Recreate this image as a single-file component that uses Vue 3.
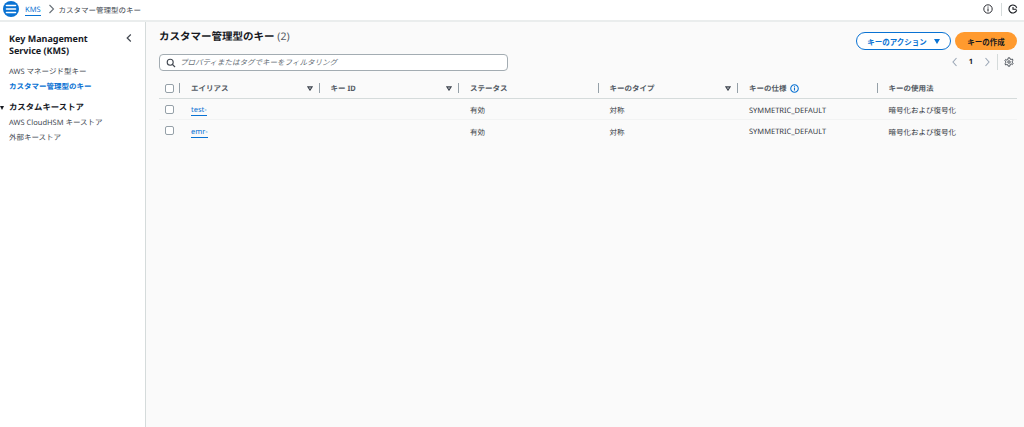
<script setup>
const columns = [
  { label: 'エイリアス', sort: true },
  { label: 'キー ID', sort: true },
  { label: 'ステータス' },
  { label: 'キーのタイプ', sort: true },
  { label: 'キーの仕様', info: true },
  { label: 'キーの使用法' },
]
const rows = [
  { alias: 'test-', id: '', status: '有効', type: '対称', spec: 'SYMMETRIC_DEFAULT', usage: '暗号化および復号化' },
  { alias: 'emr-', id: '', status: '有効', type: '対称', spec: 'SYMMETRIC_DEFAULT', usage: '暗号化および復号化' },
]
</script>

<template>
  <div class="page">
    <header class="topbar">
      <button class="menu" aria-label="menu">
        <svg width="16" height="16" viewBox="0 0 16 16"><path d="M3.5 4.5h9M3.5 8h9M3.5 11.5h9" stroke="#fff" stroke-width="1.6" stroke-linecap="round" /></svg>
      </button>
      <a class="crumb">KMS</a>
      <svg class="crumb-sep" width="8" height="10" viewBox="0 0 8 10"><path d="M2.500 1l4 4-4 4" fill="none" stroke="#687078" stroke-width="1.1" /></svg>
      <span class="crumb-now">カスタマー管理型のキー</span>
      <div class="top-icons">
        <svg width="10" height="10" viewBox="0 0 10 10"><circle cx="5" cy="5" r="4.2" fill="none" stroke="#16191f" stroke-width=".9" /><path d="M5 4.4v3M5 2.6v1" stroke="#16191f" stroke-width="1" /></svg>
        <i class="top-div"></i>
        <svg class="cog-top" width="10" height="10" viewBox="0 0 10 10"><path d="M8.7 6.3A4 4 0 1 1 8.7 3.7" fill="none" stroke="#16191f" stroke-width="1.1" /><path d="M5 3v2.2h3.6" fill="none" stroke="#16191f" stroke-width="1.1" /></svg>
      </div>
    </header>
    <div class="body">
      <aside class="side">
        <div class="side-head">
          <h2>Key Management Service (KMS)</h2>
          <svg width="10" height="10" viewBox="0 0 10 10"><path d="M6.8 1.5L3.2 5l3.6 3.5" fill="none" stroke="#414750" stroke-width="1.2" /></svg>
        </div>
        <a class="nav first">AWS マネージド型キー</a>
        <a class="nav active">カスタマー管理型のキー</a>
        <div class="group"><span class="caret"></span>カスタムキーストア</div>
        <a class="nav sub">AWS CloudHSM キーストア</a>
        <a class="nav">外部キーストア</a>
      </aside>
      <main class="main">
        <div class="title-row">
          <h1>カスタマー管理型のキー <span>(2)</span></h1>
          <div class="actions">
            <button class="btn outline">キーのアクション<span class="btn-caret"></span></button>
            <button class="btn primary">キーの作成</button>
          </div>
        </div>
        <div class="filter-row">
          <div class="search">
            <svg width="10" height="10" viewBox="0 0 10 10"><circle cx="4.2" cy="4.2" r="3" fill="none" stroke="#414750" stroke-width="1.1" /><path d="M6.4 6.4L9 9" stroke="#414750" stroke-width="1.2" /></svg>
            <span>プロパティまたはタグでキーをフィルタリング</span>
          </div>
          <div class="pager">
            <svg width="8" height="10" viewBox="0 0 8 10"><path d="M5.5 1L2 5l3.5 4" fill="none" stroke="#9ba7b6" stroke-width="1.1" /></svg>
            <b>1</b>
            <svg width="8" height="10" viewBox="0 0 8 10"><path d="M2.5 1L6 5 2.5 9" fill="none" stroke="#9ba7b6" stroke-width="1.1" /></svg>
            <i class="pager-div"></i>
            <svg width="10" height="10" viewBox="0 0 12 12"><path d="M5 1h2l.3 1.5 1.3.6 1.3-.8 1 1.7-1.100 1 .1 1.400 1.100 1-1 1.700-1.300-.8-1.300.6L7 11H5l-.3-1.500-1.300-.6-1.300.8-1-1.700 1.100-1L2.100 5.600 1 4.600l1-1.700 1.300.8 1.300-.6z" fill="none" stroke="#414750" stroke-width="1.1" /><circle cx="6" cy="6" r="1.500" fill="none" stroke="#414750" stroke-width="1.1" /></svg>
          </div>
        </div>
        <div class="table">
          <div class="tr th">
            <div class="c-check"><span class="box"></span></div>
            <div v-for="col in columns" :key="col.label" class="cell head">
              <i class="rule"></i>
              <span>{{ col.label }}</span>
              <svg v-if="col.info" class="info" width="9" height="9" viewBox="0 0 10 10"><circle cx="5" cy="5" r="4.2" fill="none" stroke="#0972d3" stroke-width="1.2" /><path d="M5 4.300v3M5 2.500v1" stroke="#0972d3" stroke-width="1.200" /></svg>
              <svg v-if="col.sort" class="sort" width="6" height="5" viewBox="0 0 7 6"><path d="M1 1h5L3.500 5z" fill="#cfd3d8" stroke="#414750" stroke-width="1.300" /></svg>
            </div>
          </div>
          <div v-for="row in rows" :key="row.alias" class="tr td">
            <div class="c-check"><span class="box"></span></div>
            <div class="cell"><a class="link">{{ row.alias }}</a></div>
            <div class="cell">{{ row.id }}</div>
            <div class="cell">{{ row.status }}</div>
            <div class="cell">{{ row.type }}</div>
            <div class="cell">{{ row.spec }}</div>
            <div class="cell">{{ row.usage }}</div>
          </div>
        </div>
      </main>
    </div>
  </div>
</template>

<style scoped>
.page {
  width: 1024px;
  height: 427px;
  display: flex;
  flex-direction: column;
  overflow: hidden;
  background: #fafafa;
  color: #16191f;
  font-family: "Noto Sans", "Noto Sans CJK JP", sans-serif;
  text-rendering: geometricPrecision;
}
.topbar {
  height: 22px;
  flex: none;
  box-sizing: border-box;
  display: flex;
  align-items: center;
  padding: 0 6px 2px 3px;
  background: #fff;
  border-bottom: 2px solid #eaeded;
  font-size: 7.5px;
  color: #414750;
}
.menu {
  width: 16px;
  height: 16px;
  padding: 0;
  border: 0;
  border-radius: 50%;
  background: #0972d3;
  display: flex;
  align-items: center;
  justify-content: center;
  margin-right: 6px;
}
.crumb {
  color: #0972d3;
  border-bottom: 1px solid #0972d3;
  line-height: 9px;
  margin-top: 3px;
}
.crumb-now { margin-top: 2px; }
.crumb-sep { margin: 0 4px 0 6px; }
.top-icons {
  margin-left: auto;
  display: flex;
  align-items: center;
  gap: 8px;
}
.cog-top { margin-left: -2px; }
.top-div {
  width: 1px;
  height: 13px;
  background: #d5dbdb;
}
.body {
  flex: 1;
  display: flex;
  min-height: 0;
}
.side {
  width: 146px;
  flex: none;
  box-sizing: border-box;
  background: #fff;
  border-right: 1px solid #d5dbdb;
  padding: 11px 0 0 9px;
  display: flex;
  flex-direction: column;
  align-items: flex-start;
  font-size: 7.5px;
  color: #414750;
}
.side-head {
  width: 125px;
  display: flex;
  justify-content: space-between;
  align-items: flex-start;
}
.side-head h2 {
  width: 90px;
  margin: 0;
  font-size: 9px;
  line-height: 12px;
  font-weight: 700;
  color: #16191f;
}
.nav {
  line-height: 15px;
}
.nav.first { margin-top: 8px; }
.active {
  color: #0972d3;
  font-weight: 700;
}
.group {
  position: relative;
  margin-top: 5.5px;
  font-size: 8.4px;
  font-weight: 700;
  line-height: 14px;
  color: #16191f;
}
.nav.sub { margin-top: 1px; }
.caret {
  position: absolute;
  left: -9px;
  top: 5px;
  width: 0;
  height: 0;
  border: 2.500px solid transparent;
  border-top: 4px solid #16191f;
  border-bottom: 0;
}
.main {
  flex: 1;
  min-width: 0;
  padding: 0 7px 0 13px;
}
.title-row {
  height: 32px;
  display: flex;
  justify-content: space-between;
}
h1 {
  margin: 7px 0 0;
  font-size: 10.500px;
  line-height: 16px;
  font-weight: 700;
}
h1 span {
  font-weight: 400;
  color: #545b64;
}
.actions {
  display: flex;
  gap: 4px;
  padding-top: 10px;
}
.btn {
  height: 18px;
  padding: 0;
  border-radius: 9px;
  font-family: inherit;
  font-size: 7.5px;
  font-weight: 700;
  display: flex;
  align-items: center;
  justify-content: center;
}
.outline {
  width: 95px;
  background: #fff;
  border: 1px solid #0972d3;
  color: #0972d3;
  box-sizing: border-box;
}
.btn-caret {
  margin-left: 7px;
  border: 3.500px solid transparent;
  border-top: 5px solid #0972d3;
  border-bottom: 0;
}
.primary {
  width: 62px;
  background: #ff9a2e;
  border: 0;
  color: #16191f;
}
.filter-row {
  height: 24px;
  display: flex;
  justify-content: space-between;
  align-items: flex-start;
}
.search {
  width: 349px;
  height: 17px;
  box-sizing: border-box;
  background: #fff;
  border: 1px solid #a3acb2;
  border-radius: 4px;
  display: flex;
  align-items: center;
  gap: 4px;
  padding-left: 6px;
  font-size: 7.5px;
  font-style: italic;
  color: #687078;
}
.pager {
  display: flex;
  align-items: center;
  height: 16px;
  margin-right: 3px;
  font-size: 7.5px;
  color: #16191f;
}
.pager b { margin: 0 10px 0 10px; }
.pager-div {
  width: 1px;
  height: 16px;
  margin: 0 6px 0 6px;
  background: #d5dbdb;
}
.table { width: 858px; }
.tr {
  display: grid;
  grid-template-columns: 21px repeat(6, 139.500px);
  align-items: center;
  box-sizing: border-box;
}
.th {
  height: 21px;
  border-bottom: 1px solid #d5dbdb;
  font-size: 7.5px;
  font-weight: 700;
  color: #545b64;
}
.td {
  height: 21px;
  border-bottom: 1px solid #f2f3f3;
  font-size: 7.5px;
  color: #33383f;
}
.td .cell { padding-top: 3px; }
.td:last-child { border-bottom: 0; }
.c-check {
  padding-left: 6px;
  display: flex;
}
.box {
  width: 9px;
  height: 9px;
  box-sizing: border-box;
  background: #fff;
  border: 1px solid #95a0a8;
  border-radius: 2px;
}
.cell {
  padding-left: 11px;
  min-width: 0;
}
.head {
  position: relative;
  display: flex;
  align-items: center;
  align-self: stretch;
}
.rule {
  position: absolute;
  left: -1px;
  top: 5px;
  width: 1px;
  height: 10px;
  background: #95a0a8;
}
.info { margin-left: 3px; }
.sort {
  position: absolute;
  right: 7px;
  top: 8px;
}
.link {
  color: #0972d3;
  border-bottom: 1px solid #0972d3;
  line-height: 9px;
  display: inline-block;
}
</style>
